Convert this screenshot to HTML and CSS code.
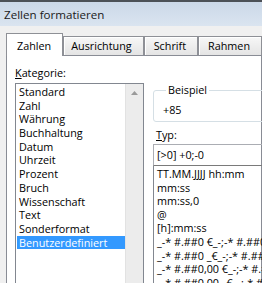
FILE: index.html
```html
<!DOCTYPE html>
<html lang="de">
<head>
<meta charset="UTF-8">
<meta name="viewport" content="width=device-width, initial-scale=1.0">
<title>Zellen formatieren</title>
<link rel="stylesheet" href="styles.css">
</head>
<body>
<div class="window">
  <div class="titlebar">Zellen formatieren</div>

  <div class="dialog">
    <!-- Tab strip -->
    <div class="tabs">
      <div class="tab active">Zahlen</div>
      <div class="tab">Ausrichtung</div>
      <div class="tab">Schrift</div>
      <div class="tab">Rahmen</div>
      <div class="tab">Ausfüllen</div>
    </div>

    <div class="panel">
      <!-- Left: category list -->
      <div class="col-left">
        <div class="label"><u>K</u>ategorie:</div>
        <div class="listbox">
          <ul class="items">
            <li>Standard</li>
            <li>Zahl</li>
            <li>Währung</li>
            <li>Buchhaltung</li>
            <li>Datum</li>
            <li>Uhrzeit</li>
            <li>Prozent</li>
            <li>Bruch</li>
            <li>Wissenschaft</li>
            <li>Text</li>
            <li>Sonderformat</li>
            <li class="selected">Benutzerdefiniert</li>
          </ul>
          <div class="scrollbar">
            <svg class="arrow" width="7" height="4" viewBox="0 0 7 4"><path d="M0 4 L3.5 0 L7 4 Z" fill="#9a9a9a"/></svg>
          </div>
        </div>
      </div>

      <!-- Right: sample and type -->
      <div class="col-right">
        <fieldset class="group">
          <legend>Beispiel</legend>
          <div class="sample">+85</div>
        </fieldset>
        <div class="label typ-label"><u>T</u>yp:</div>
        <div class="textbox">[&gt;0] +0;-0</div>
        <ul class="codes">
          <li>TT.MM.JJJJ hh:mm</li>
          <li>mm:ss</li>
          <li>mm:ss,0</li>
          <li>@</li>
          <li>[h]:mm:ss</li>
          <li>_-* #.##0 €_-;-* #.##0 €_-;_-* "-" €_-;_-@_-</li>
          <li>_-* #.##0 _€_-;-* #.##0 _€_-;_-* "-" _€_-;_-@_-</li>
          <li>_-* #.##0,00 €_-;-* #.##0,00 €_-;_-* "-"?? €_-;_-@_-</li>
          <li>_-* #.##0,00 _€_-;-* #.##0,00 _€_-;_-* "-"??</li>
        </ul>
      </div>
    </div>
  </div>
</div>
</body>
</html>
```

FILE: styles.css
```css
html, body {
  margin: 0;
  padding: 0;
}
body {
  font-family: "Open Sans", "Noto Sans", sans-serif;
  font-size: 10.8px;
  color: #000;
  background: #f0f0f0;
}
.window {
  width: 262px;
  height: 283px;
  overflow: hidden;
  background: #f0f0f0;
}
.titlebar {
  height: 24px;
  line-height: 26px;
  padding-left: 4px;
  font-size: 11.6px;
  color: #1a1a1a;
  border-top: 2px solid #4c5157;
  background: linear-gradient(#cbd8e8, #dae4f0);
}
.dialog {
  padding-top: 7px;
}
/* Tabs */
.tabs {
  display: flex;
  align-items: flex-end;
  height: 23px;
  padding-left: 6px;
  margin-bottom: -1px;
  position: relative;
  white-space: nowrap;
}
.tab {
  flex-shrink: 0;
  box-sizing: border-box;
  height: 19px;
  line-height: 18px;
  margin-bottom: 1px;
  padding: 0 11px 0 9px;
  border: 1px solid #8e9096;
  border-bottom: none;
  background: linear-gradient(#f7f7f7, #e4e4e4);
  box-shadow: inset 1px 1px 0 #fff;
}
.tab.active {
  height: 23px;
  margin-bottom: 0;
  padding: 3px 11px 0 10px;
  background: #fff;
  box-shadow: none;
}
.tab.active + .tab {
  padding-left: 7px;
}
.panel {
  display: flex;
  margin-left: 6px;
  height: 240px;
  background: #fff;
  border: 1px solid #898c95;
}
.label {
  height: 14px;
  line-height: 14px;
}
/* Category list */
.col-left {
  padding: 10px 0 0 8px;
}
.col-left .label {
  margin-bottom: 3px;
}
.listbox {
  display: flex;
  width: 127px;
  height: 220px;
  border: 1px solid #828790;
}
.items {
  flex: 1;
  list-style: none;
  margin: 0;
  padding: 1px 0 0 1px;
}
.items li {
  height: 13.7px;
  line-height: 13.7px;
  padding-left: 2px;
  white-space: nowrap;
}
.items li.selected {
  background: #3399ff;
  color: #fff;
}
.scrollbar {
  width: 17px;
  background: #ececec;
  border-left: 1px solid #e2e2e2;
  text-align: center;
}
.arrow {
  display: block;
  margin: 7px auto 0;
}
/* Right column */
.col-right {
  width: 140px;
  flex-shrink: 0;
  margin-left: 9px;
  padding-top: 27px;
}
.group {
  margin: 0;
  padding: 6px 0 4px 9px;
  border: 1px solid #d5dfe5;
  border-radius: 3px;
}
.group legend {
  padding: 0 2px;
  margin-left: 3px;
  line-height: 14px;
}
.sample {
  line-height: 14px;
}
.typ-label {
  margin-top: 6px;
  padding-left: 3px;
}
.textbox {
  box-sizing: border-box;
  height: 22px;
  line-height: 19px;
  margin-top: 2px;
  padding-left: 3px;
  border: 1px solid #abadb3;
  border-bottom-color: #7a7a7a;
  white-space: nowrap;
}
.codes {
  list-style: none;
  margin: 0;
  padding: 1px 0 0 3px;
  height: 200px;
  border: 1px solid #828790;
  border-top: none;
}
.codes li {
  height: 13.6px;
  line-height: 13.6px;
  white-space: nowrap;
}
```
